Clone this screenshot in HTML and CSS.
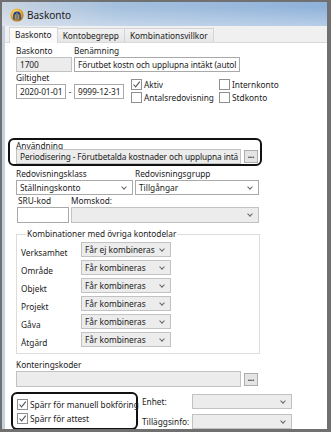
FILE: index.html
```html
<!DOCTYPE html>
<html lang="sv">
<head>
    <meta charset="utf-8">
    <title>Baskonto</title>
    <link rel="stylesheet" href="styles.css">
</head>
<body>
<div class="window">
    <div class="titlebar">
        <svg class="app-icon" width="14" height="14" viewBox="0 0 14 14">
            <defs>
                <radialGradient id="gold" cx="0.4" cy="0.35" r="0.7">
                    <stop offset="0" stop-color="#ffe48a"/>
                    <stop offset="0.6" stop-color="#e7a92a"/>
                    <stop offset="1" stop-color="#a86a12"/>
                </radialGradient>
            </defs>
            <circle cx="7" cy="7" r="6.6" fill="url(#gold)"/>
            <path d="M3.2 11.6 V7.2 A3.8 3.8 0 0 1 10.8 7.2 V11.6 Z" fill="#1f3f8c"/>
            <path d="M5.2 11.4 V6.4 M7 11.4 V4.8 M8.8 11.4 V6.4" stroke="#f3c84a" stroke-width="0.9"/>
        </svg>
        <span class="title">Baskonto</span>
    </div>

    <div class="tabs">
        <span class="tab active">Baskonto</span>
        <span class="tab">Kontobegrepp</span>
        <span class="tab">Kombinationsvillkor</span>
    </div>

    <div class="panel">
        <div class="row">
            <div class="field">
                <label>Baskonto</label>
                <div class="input disabled w-konto">1700</div>
            </div>
            <div class="field">
                <label>Benämning</label>
                <div class="input w-namn">Förutbet kostn och upplupna intäkt (autol</div>
            </div>
        </div>

        <div class="row">
            <div class="field">
                <label>Giltighet</label>
                <div class="dates">
                    <div class="input w-date">2020-01-01</div>
                    <span class="dash">-</span>
                    <div class="input w-date">9999-12-31</div>
                </div>
            </div>
            <div class="checks">
                <div class="check"><span class="box checked"></span>Aktiv</div>
                <div class="check"><span class="box"></span>Internkonto</div>
                <div class="check"><span class="box"></span>Antalsredovisning</div>
                <div class="check"><span class="box"></span>Stdkonto</div>
            </div>
        </div>

        <div class="mark mark-anv">
            <label>Användning</label>
            <div class="with-btn">
                <div class="input disabled w-anv">Periodisering - Förutbetalda kostnader och upplupna intä</div>
                <span class="dots">...</span>
            </div>
        </div>

        <div class="row">
            <div class="field">
                <label class="under-mark">Redovisningsklass</label>
                <div class="select w-klass"><span>Ställningskonto</span><i class="chev"></i></div>
            </div>
            <div class="field">
                <label class="under-mark">Redovisningsgrupp</label>
                <div class="select w-grupp"><span>Tillgångar</span><i class="chev"></i></div>
            </div>
        </div>

        <div class="row">
            <div class="field">
                <label class="sru-label">SRU-kod</label>
                <div class="input tall w-sru"></div>
            </div>
            <div class="field">
                <label>Momskod:</label>
                <div class="select tall disabled w-moms"><span></span><i class="chev"></i></div>
            </div>
        </div>

        <fieldset class="group">
            <legend>Kombinationer med övriga kontodelar</legend>
            <div class="combo">
                <span>Verksamhet</span>
                <div class="select disabled w-combo"><span>Får ej kombineras</span><i class="chev"></i></div>
                <span>Område</span>
                <div class="select disabled w-combo"><span>Får kombineras</span><i class="chev"></i></div>
                <span>Objekt</span>
                <div class="select disabled w-combo"><span>Får kombineras</span><i class="chev"></i></div>
                <span>Projekt</span>
                <div class="select disabled w-combo"><span>Får kombineras</span><i class="chev"></i></div>
                <span>Gåva</span>
                <div class="select disabled w-combo"><span>Får kombineras</span><i class="chev"></i></div>
                <span>Åtgärd</span>
                <div class="select disabled w-combo"><span>Får kombineras</span><i class="chev"></i></div>
            </div>
        </fieldset>

        <div class="field kont">
            <label>Konteringskoder</label>
            <div class="with-btn">
                <div class="input tall disabled w-anv"></div>
                <span class="dots">...</span>
            </div>
        </div>

        <div class="bottom">
            <div class="mark mark-spar">
                <div class="check"><span class="box checked"></span>Spärr för manuell bokföring</div>
                <div class="check"><span class="box checked"></span>Spärr för attest</div>
            </div>
            <div class="extra">
                <span>Enhet:</span>
                <div class="select disabled w-extra"><span></span><i class="chev"></i></div>
                <span>Tilläggsinfo:</span>
                <div class="select disabled w-extra"><span></span><i class="chev"></i></div>
            </div>
        </div>
    </div>
</div>
</body>
</html>
```

FILE: styles.css
```css
*{
    box-sizing: border-box;
    margin: 0;
    padding: 0;
}

body{
    font-family: "Noto Sans", "DejaVu Sans", sans-serif;
    font-size: 8.3px;
    color: #222;
    background: #fff;
}

/* window frame */
.window{
    width: 331px;
    height: 432px;
    border: 2px solid #707070;
    border-right-width: 4px;
    border-bottom-width: 3px;
    background: #c3d1e1;
    display: flex;
    flex-direction: column;
    overflow: hidden;
}

.titlebar{
    flex-shrink: 0;
    height: 24px;
    display: flex;
    align-items: center;
    gap: 3px;
    padding: 2px 0 0 8px;
    background:
        linear-gradient(to bottom, rgba(255,255,255,0) 20%, rgba(255,255,255,0.35) 100%),
        linear-gradient(to right, #c9d4e1 0%, #a5c0de 35%, #8fb2da 100%);
}

.title{
    font-size: 10px;
    color: #1a1a1a;
}

/* tabs */
.tabs{
    flex-shrink: 0;
    height: 17px;
    margin: 0 0 0 3px;
    padding-left: 5px;
    display: flex;
    align-items: flex-end;
    background: #f0f0f0;
    border-bottom: 1px solid #d9d9d9;
}

.tab{
    height: 14px;
    line-height: 13px;
    padding: 0 5px;
    margin-left: -1px;
    border: 1px solid #d4d4d4;
    border-bottom: 0;
    background: linear-gradient(#f2f2f2, #e6e6e6);
}

.tab.active{
    height: 16px;
    line-height: 14px;
    margin-bottom: -1px;
    background: #fbfbfb;
    position: relative;
}

/* panel */
.panel{
    flex: 1;
    margin-left: 3px;
    padding: 2px 0 0 11px;
    background: #fff;
}

.row{
    display: flex;
    gap: 2px;
}

.field{
    display: flex;
    flex-direction: column;
}

label{
    display: block;
    height: 12px;
    line-height: 12px;
    white-space: nowrap;
}

.input, .select{
    height: 15px;
    line-height: 13px;
    padding: 0 3px;
    border: 1px solid #a9a9a9;
    background: #fff;
    white-space: nowrap;
    overflow: hidden;
}

.input{
    letter-spacing: -0.1px;
}

.tall{
    height: 16px;
}

.disabled{
    background: #ececec;
    border-color: #c2c2c2;
}

.select{
    display: flex;
    align-items: center;
    justify-content: space-between;
}

.chev{
    width: 4px;
    height: 4px;
    margin: 0 3px 2px 0;
    border-right: 1px solid #666;
    border-bottom: 1px solid #666;
    transform: rotate(45deg);
}

.w-konto{ width: 56px; }
.w-namn{ width: 166px; }
.w-date{ width: 50px; }
.w-anv{ width: 225px; }
.w-klass{ width: 117px; }
.w-grupp{ width: 124px; }
.w-sru{ width: 52px; margin-left: 1px; }
.w-moms{ width: 188px; }
.w-combo{ width: 90px; }
.w-extra{ width: 100px; }

.dates{
    display: flex;
    align-items: center;
}

.dash{
    width: 8px;
    text-align: center;
}

/* checkboxes */
.checks{
    display: grid;
    grid-template-columns: 88px auto;
    grid-auto-rows: 13px;
    margin: 6px 0 0 5px;
}

.check{
    display: flex;
    align-items: center;
    gap: 2px;
    white-space: nowrap;
}

.box{
    flex-shrink: 0;
    width: 11px;
    height: 11px;
    border: 1px solid #8e8f8f;
    background: #fff;
}

.box.checked{
    background: #fff url("data:image/svg+xml,%3Csvg xmlns='http://www.w3.org/2000/svg' width='9' height='9'%3E%3Cpath d='M1.5 4.5 L3.6 6.8 L7.8 1.6' fill='none' stroke='%23555' stroke-width='1.1'/%3E%3C/svg%3E") center no-repeat;
}

/* black annotation frames */
.mark{
    border: 2px solid #111;
    border-radius: 6px;
}

.mark-anv{
    width: 254px;
    margin: 34px 0 0 -8px;
    padding: 0 2px 0 6px;
}

.mark-anv label{
    height: 9px;
    line-height: 9px;
    padding-top: 1px;
    box-sizing: content-box;
    margin-bottom: -1px;
}

.with-btn{
    display: flex;
    align-items: center;
    gap: 3px;
}

.dots{
    width: 14px;
    height: 13px;
    font-size: 8px;
    line-height: 8px;
    text-align: center;
    font-weight: bold;
    border: 1px solid #adadad;
    background: #e4e4e4;
}

.under-mark{
    margin-top: 2px;
}

.sru-label{
    padding-left: 2px;
}

/* group box */
.group{
    width: 244px;
    margin-top: 6px;
    padding: 0 0 6px 4px;
    border: 1px solid #dcdcdc;
}

.group legend{
    margin-left: 5px;
    padding: 0 1px;
    line-height: 10px;
}

.combo{
    display: grid;
    grid-template-columns: 60px 90px;
    grid-auto-rows: 15px;
    row-gap: 3px;
    align-items: center;
    padding-top: 3px;
}

.combo > span{
    padding-top: 6px;
}

.kont{
    margin-top: 5px;
}

/* bottom */
.bottom{
    display: flex;
    gap: 4px;
    margin-top: 5px;
}

.mark-spar{
    width: 127px;
    height: 38px;
    margin-left: -5px;
    padding: 3px 0 0 4px;
    display: grid;
    grid-auto-rows: 14px;
}

.extra{
    display: grid;
    grid-template-columns: 50px 100px;
    grid-auto-rows: 15px;
    row-gap: 5px;
    align-items: center;
    padding-top: 2px;
}
```
